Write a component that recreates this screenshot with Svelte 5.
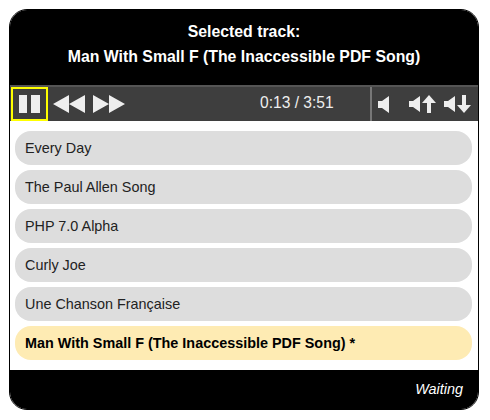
<script lang="ts">
	const tracks = [
		{ title: 'Every Day' },
		{ title: 'The Paul Allen Song' },
		{ title: 'PHP 7.0 Alpha' },
		{ title: 'Curly Joe' },
		{ title: 'Une Chanson Française' },
		{ title: 'Man With Small F (The Inaccessible PDF Song) *', current: true }
	];
</script>

<div class="player">
	<header class="selected">
		<div>Selected track:</div>
		<div>Man With Small F (The Inaccessible PDF Song)</div>
	</header>

	<div class="controls">
		<button class="btn pause" aria-label="Pause">
			<svg width="21" height="18" viewBox="0 0 21 18"><path d="M0 0h8v18H0zM12 0h9v18h-9z" fill="#eee" /></svg>
		</button>
		<button class="btn rewind" aria-label="Rewind">
			<svg width="32" height="18" viewBox="0 0 32 18"><path d="M0 9 16 0v18zM16 9 32 0v18z" fill="#eee" /></svg>
		</button>
		<button class="btn forward" aria-label="Fast forward">
			<svg width="32" height="18" viewBox="0 0 32 18"><path d="M0 0l16 9-16 9zM16 0l16 9-16 9z" fill="#eee" /></svg>
		</button>
		<div class="time">0:13 / 3:51</div>
		<div class="volume">
			<button class="btn mute" aria-label="Mute">
				<svg width="11" height="17" viewBox="0 0 11 17"><path d="M0 5h4l7-5v17l-7-5H0z" fill="#eee" /></svg>
			</button>
			<button class="btn up" aria-label="Volume up">
				<svg width="27" height="18" viewBox="0 0 27 18"><path d="M0 6h4l7-5v16l-7-5H0zM20 0l7 8h-5v10h-4V8h-5z" fill="#eee" /></svg>
			</button>
			<button class="btn down" aria-label="Volume down">
				<svg width="27" height="18" viewBox="0 0 27 18"><path d="M0 6h4l7-5v16l-7-5H0zM18 0h4v10h5l-7 8-7-8h5z" fill="#eee" /></svg>
			</button>
		</div>
	</div>

	<ul class="tracks">
		{#each tracks as track}
			<li class:current={track.current}>{track.title}</li>
		{/each}
	</ul>

	<footer class="status">Waiting</footer>
</div>

<style>
	:global(body) {
		background: #fff;
	}

	.player {
		box-sizing: border-box;
		width: 470px;
		height: 401px;
		margin: 9px 0 0 9px;
		border: 1px solid #000;
		border-radius: 18px;
		overflow: hidden;
		display: flex;
		flex-direction: column;
		font-family: 'Liberation Sans', Arial, sans-serif;
		font-size: 14.4px;
	}

	.selected {
		height: 75px;
		box-sizing: border-box;
		background: #000;
		color: #fff;
		font-size: 15.84px;
		font-weight: bold;
		text-align: center;
		line-height: 25px;
		padding-top: 9px;
	}

	.controls {
		height: 36px;
		box-sizing: border-box;
		background: #3e3e3e;
		border-top: 2px solid #555;
		display: flex;
		align-items: center;
		color: #eee;
	}

	.btn {
		background: none;
		border: 0;
		padding: 0;
		margin: 0;
		display: flex;
		align-items: center;
		justify-content: center;
	}

	.pause {
		box-sizing: border-box;
		width: 37px;
		height: 34px;
		margin-left: 1px;
		border: 2px solid #ff0;
	}

	.rewind {
		margin-left: 5px;
	}

	.forward {
		margin-left: 8px;
	}

	.time {
		margin-left: 135px;
		padding-bottom: 2px;
		font-size: 15.6px;
		white-space: nowrap;
	}

	.volume {
		height: 100%;
		display: flex;
		align-items: center;
		border-left: 2px solid #777;
		margin-left: auto;
		padding-left: 6px;
		padding-right: 7px;
	}

	.up {
		margin-left: 20px;
	}

	.down {
		margin-left: 8px;
	}

	.tracks {
		list-style: none;
		margin: 0;
		padding: 10px 6px 10px 5px;
		height: 249px;
		box-sizing: border-box;
		display: flex;
		flex-direction: column;
		gap: 5px;
		background: #fff;
	}

	.tracks li {
		height: 34px;
		line-height: 34px;
		padding-left: 10px;
		border-radius: 16px;
		background: #ddd;
		color: #222;
	}

	.tracks li.current {
		background: #feebb3;
		color: #000;
		font-weight: bold;
	}

	.status {
		flex: 1;
		background: #000;
		color: #fff;
		font-style: italic;
		text-align: right;
		padding: 11px 15px 0 0;
	}
</style>
